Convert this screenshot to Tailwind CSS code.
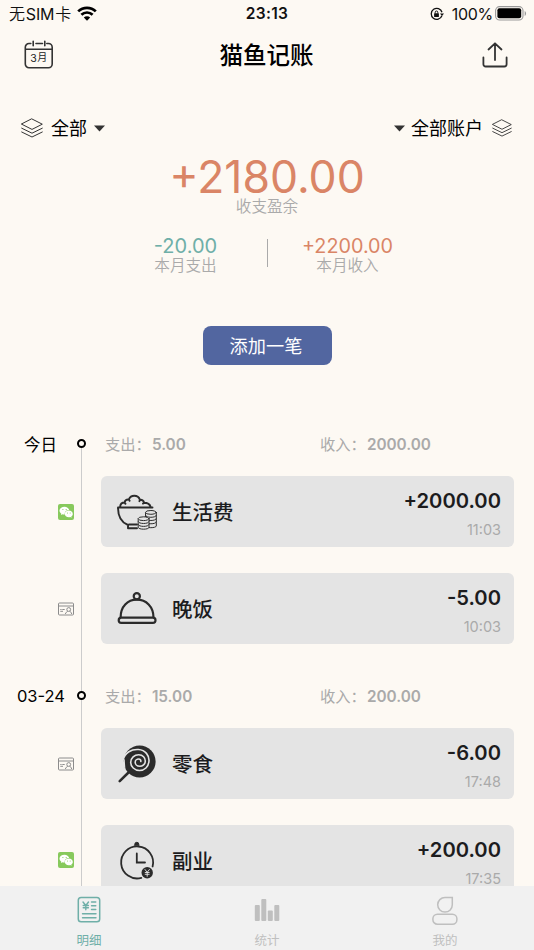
<!DOCTYPE html>
<html lang="zh-CN">
<head>
<meta charset="utf-8">
<meta name="viewport" content="width=device-width, initial-scale=1">
<title>猫鱼记账</title>
<script src="https://cdn.jsdelivr.net/npm/@tailwindcss/browser@4"></script>
</head>
<body class="bg-[#fdf9f3]">
<svg class="hidden">
  <defs>
    <g id="layers" fill="none" stroke="#333" stroke-linejoin="round" stroke-linecap="round">
      <path d="M11 1 21.3 6.2 11 11.400 .7 6.200Z M.7 10.200 11 15.200 21.300 10.200 M.7 14 11 19 21.300 14"/>
    </g>
    <g id="wechat">
      <rect width="16" height="16" rx="2" fill="#87c95c"/>
      <path fill="#fff" d="M6.500 2.700C3.700 2.700 1.500 4.400 1.500 6.600c0 1.300.7 2.300 1.800 3.100l-.4 1.400 1.700-.8c.7.2 1.300.3 2.200.2C6.200 8 8.300 5.900 11.200 6 10.700 4 8.800 2.700 6.500 2.700Z"/>
      <path fill="#fff" d="M10.800 6.600c-2.300 0-4 1.500-4 3.300s1.700 3.300 4 3.300c.5 0 1-.1 1.500-.2l1.300.7-.3-1.200c.9-.6 1.500-1.500 1.500-2.600 0-1.800-1.800-3.300-4-3.300Z"/>
      <g fill="#87c95c"><circle cx="4.900" cy="5.500" r=".6"/><circle cx="8.200" cy="5.500" r=".6"/><circle cx="9.500" cy="9" r=".5"/><circle cx="12.200" cy="9" r=".5"/></g>
    </g>
    <g id="idcard" fill="none" stroke="#8c8c8c" stroke-width="1">
      <rect x=".5" y="2" width="15" height="12" rx="1"/>
      <path d="M.5 5h15M2.300 8.500h1.300M4.300 8.500h2.400M2.300 10.300h2.700M7.400 13c.3-1.400 1.500-2.400 2.400-2.700M11.600 10.300c1 .3 1.800 1.200 2.100 2.700"/>
      <circle cx="10.700" cy="8.500" r="1.900"/>
    </g>
  </defs>
</svg>
<div class="w-[534px] h-[950px] overflow-hidden flex flex-col bg-[#fdf9f3] text-[#111] font-['Inter','Noto_Sans_CJK_SC',sans-serif] whitespace-nowrap">

  <!-- Status bar -->
  <div class="h-7 shrink-0 grid grid-cols-3 items-center pl-[9px] pr-[7px]">
    <div class="flex items-center text-[16px] tracking-[-0.2px]">
      <span class="font-[350]">无</span><span class="ml-[1px]">SIM</span><span class="ml-[1px] font-[350]">卡</span>
      <svg class="ml-[6px]" width="20" height="16" viewBox="0 0 20 16" fill="none" stroke="#000" stroke-width="2.700">
        <path d="M1.200 5.400a12.500 12.500 0 0 1 17.600 0M4.400 8.800a8 8 0 0 1 11.200 0"/><path d="M6.800 11.500a4.600 4.600 0 0 1 6.400 0L10 14.700Z" fill="#000" stroke="none"/>
      </svg>
    </div>
    <div class="text-center pr-[2px] text-[15.500px] font-semibold tracking-[0.300px]">23:13</div>
    <div class="flex items-center justify-end text-[16px]">
      <svg width="14" height="14" viewBox="0 0 14 14" fill="none" stroke="#111" stroke-width="1.300">
        <path d="M11.900 8.800A5.500 5.500 0 1 1 12 5.200"/><path d="M10 6.500h4L12 9Z" fill="#111" stroke="none"/>
        <rect x="4.100" y="6.300" width="4.800" height="3.600" rx=".5" fill="#111" stroke="none"/><path d="M5.200 6.500V5.300a1.300 1.300 0 0 1 2.600 0v1.200" stroke-width="1"/>
      </svg>
      <span class="ml-[8px] tracking-[-0.300px]">100%</span>
      <svg class="ml-[2px]" width="32" height="16" viewBox="0 0 32 16"><rect x=".6" y=".6" width="27.400" height="13.400" rx="4" fill="none" stroke="#999" stroke-width="1.100"/><rect x="2.400" y="2.300" width="23.800" height="10" rx="2" fill="#000"/><path d="M29.700 5c1.800.7 1.800 4.300 0 5Z" fill="#999"/></svg>
    </div>
  </div>

  <!-- Title bar -->
  <header class="h-[54px] shrink-0 flex items-center justify-between pl-[24px] pr-[26px]">
    <svg width="30" height="30" viewBox="0 0 30 30" fill="none" stroke="#333" stroke-width="1.600" stroke-linecap="round">
      <path d="M6.800 3.500H5a3.700 3.700 0 0 0-3.700 3.700V24A3.700 3.700 0 0 0 5 27.700h19.500a3.700 3.700 0 0 0 3.700-3.700V7.200a3.700 3.700 0 0 0-3.700-3.700h-1.700M12 3.500h6.500M1.500 9.200H28M9.200 1.200v4.600M20.800 1.200v4.600"/>
      <text x="6.200" y="21.500" font-size="10.500" fill="#222" stroke="none">3</text><text x="13.200" y="21.300" font-size="10" fill="#222" stroke="none">月</text>
    </svg>
    <h1 class="pt-[2px] pr-[3px] text-[23.500px] font-medium text-black">猫鱼记账</h1>
    <svg width="26" height="26" viewBox="0 0 26 26" fill="none" stroke="#333" stroke-width="1.800" stroke-linecap="round" stroke-linejoin="round">
      <path d="M13 18V1.500M6.500 7.500 13 1.300l6.500 6.200M1.400 15.500v6.800a2.200 2.200 0 0 0 2.200 2.200h18.800a2.200 2.200 0 0 0 2.200-2.200v-6.800"/>
    </svg>
  </header>

  <!-- Filters -->
  <div class="h-[32px] mt-[30px] shrink-0 flex items-center justify-between pl-[21px] pr-[22px] text-[18px] text-black">
    <div class="flex items-center">
      <svg width="22" height="20" viewBox="0 0 22 20"><use href="#layers"/></svg>
      <span class="ml-[8px] pt-px">全部</span>
      <svg class="ml-[7px]" width="11" height="7" viewBox="0 0 11 7"><path d="M0 .500h11L5.500 6.500Z" fill="#333"/></svg>
    </div>
    <div class="flex items-center">
      <svg width="11" height="7" viewBox="0 0 11 7"><path d="M0 .500h11L5.500 6.500Z" fill="#333"/></svg>
      <span class="ml-[6px] pt-px">全部账户</span>
      <svg class="ml-[9px]" width="20" height="18" viewBox="0 0 22 20"><use href="#layers"/></svg>
    </div>
  </div>

  <!-- Monthly summary -->
  <section class="shrink-0 flex flex-col items-center text-[#aaa]">
    <div class="mt-[11px] h-[44px] leading-[44px] text-[44.500px] text-[#da8566]">+2180.00</div>
    <div class="h-[20px] mt-[-2px] leading-[20px] text-[15.600px] font-[350]">收支盈余</div>
    <div class="mt-[19px] grid grid-cols-[162px_1px_162px]">
      <div class="text-center">
        <div class="h-[20px] leading-[20px] text-[20px] text-[#6fafa8]">-20.00</div>
        <div class="h-[20px] leading-[20px] text-[15.600px] font-[350]">本月支出</div>
      </div>
      <div class="mt-[3px] w-px h-[28px] bg-[#aaa]"></div>
      <div class="text-center pr-[2px]">
        <div class="h-[20px] leading-[20px] text-[19.800px] text-[#da8566]">+2200.00</div>
        <div class="h-[20px] leading-[20px] text-[15.600px] font-[350]">本月收入</div>
      </div>
    </div>
    <button class="mt-[50px] w-[129px] h-[39px] pt-[3px] pr-[2px] rounded-[8px] bg-[#5266a0] text-white text-[18.200px]">添加一笔</button>
  </section>

  <!-- Timeline -->
  <main class="mt-[46px] flex-1 min-h-0 overflow-hidden">
    <section>
      <div class="h-[65px] flex items-center">
        <div class="w-[57px] pt-[3px] text-right text-[16.500px] text-black">今日</div>
        <div class="ml-[20px] w-[9px] h-full flex flex-col items-center"><i class="h-[28px]"></i><i class="w-[9px] h-[9px] shrink-0 rounded-full border-2 border-black"></i><i class="w-px flex-1 bg-[#ccc]"></i></div>
        <div class="ml-[19px] w-[215px] pt-[3px] text-[15.300px] text-[#aaa]">支出：<span class="ml-px font-semibold">5.00</span></div>
        <div class="pt-[3px] text-[15.300px] text-[#aaa]">收入：<span class="ml-px font-semibold">2000.00</span></div>
      </div>
      <div class="h-[97px] flex">
        <div class="w-[82px] h-full border-r border-[#ccc] flex justify-end pr-[7px] pt-[28px]"><svg width="16" height="16"><use href="#wechat"/></svg></div>
        <article class="ml-[19px] w-[413px] h-[71px] rounded-[6px] bg-[#e4e4e4] flex items-center pl-[16px] pr-[13px]">
          <svg width="40" height="40" viewBox="0 0 40 40" fill="none" stroke="#2b2b2b" stroke-width="1.900" stroke-linecap="round" stroke-linejoin="round">
            <path d="M1 15.500H35.500M1 15.700c0 9 4 15 10 17.300v3.200h9M3.200 14.300c.2-2.300 1.800-3.700 4.300-3.800.6-2.300 2-3.300 4.300-3C13 4.500 15 3.700 17.300 3.700c2.600 0 4.600 1 5.600 4 2.300-.2 3.700 1 4.200 3 3 0 5.700 1.500 6.500 4M12 32.500h8M7.500 10.500l1 1.300M11.800 7.500l.8 1.300M22.900 7.700l-.5 1.500M27 10.700l-1 1"/>
            <g fill="#e4e4e4" stroke-width="1">
              <path d="M28.500 20.500v13.500c0 1 2.500 1.700 5.300 1.700s5.500-.7 5.500-1.700V20.500"/><ellipse cx="33.900" cy="20.400" rx="5.400" ry="1.900"/>
              <path d="M28.500 23.500c0 2.500 10.800 2.500 10.800 0M28.500 26.700c0 2.500 10.800 2.500 10.800 0M28.500 30c0 2.500 10.800 2.500 10.800 0"/>
              <path d="M21.200 26.800v8.500c0 2.500 10.800 2.500 10.800 0v-8.500"/><ellipse cx="26.600" cy="26.700" rx="5.400" ry="1.900"/>
              <path d="M21.200 29.700c0 2.500 10.800 2.500 10.800 0M21.200 32.600c0 2.500 10.800 2.500 10.800 0"/>
            </g>
          </svg>
          <span class="ml-[15px] pt-[3px] text-[20.500px] font-medium text-[#1c1c1e]">生活费</span>
          <div class="ml-auto pt-[3px] text-right"><div class="h-[30px] leading-[30px] text-[20.200px] font-semibold text-[#1c1c1e]">+2000.00</div><div class="h-[20px] mt-[4px] leading-[20px] text-[14.500px] text-[#aaa]">11:03</div></div>
        </article>
      </div>
      <div class="h-[90px] flex">
        <div class="w-[82px] h-full border-r border-[#ccc] flex justify-end pr-[7px] pt-[28px]"><svg width="16" height="16"><use href="#idcard"/></svg></div>
        <article class="ml-[19px] w-[413px] h-[71px] rounded-[6px] bg-[#e4e4e4] flex items-center pl-[16px] pr-[13px]">
          <svg width="40" height="40" viewBox="0 0 40 40" fill="none" stroke="#2b2b2b" stroke-width="2.200">
            <circle cx="19.800" cy="7.300" r="3.100"/><path d="M3.600 28.500C3.600 17.500 10.500 10.700 19.800 10.700S36.500 17.500 36.500 28.500"/><rect x="1.700" y="28.600" width="36.800" height="5.300" rx="2.600"/>
          </svg>
          <span class="ml-[15px] pt-[3px] text-[20.500px] font-medium text-[#1c1c1e]">晚饭</span>
          <div class="ml-auto pt-[3px] text-right"><div class="h-[30px] leading-[30px] text-[20.200px] font-semibold text-[#1c1c1e]">-5.00</div><div class="h-[20px] mt-[4px] leading-[20px] text-[14.500px] text-[#aaa]">10:03</div></div>
        </article>
      </div>
    </section>

    <section>
      <div class="h-[65px] flex items-center">
        <div class="w-[65px] pt-px text-right text-[16.500px] text-black">03-24</div>
        <div class="ml-[12px] w-[9px] h-full flex flex-col items-center"><i class="w-px h-[28px] bg-[#ccc]"></i><i class="w-[9px] h-[9px] shrink-0 rounded-full border-2 border-black"></i><i class="w-px flex-1 bg-[#ccc]"></i></div>
        <div class="ml-[19px] w-[215px] pt-[3px] text-[15.300px] text-[#aaa]">支出：<span class="ml-px font-semibold">15.00</span></div>
        <div class="pt-[3px] text-[15.300px] text-[#aaa]">收入：<span class="ml-px font-semibold">200.00</span></div>
      </div>
      <div class="h-[97px] flex">
        <div class="w-[82px] h-full border-r border-[#ccc] flex justify-end pr-[7px] pt-[28px]"><svg width="16" height="16"><use href="#idcard"/></svg></div>
        <article class="ml-[19px] w-[413px] h-[71px] rounded-[6px] bg-[#e4e4e4] flex items-center pl-[16px] pr-[13px]">
          <svg width="40" height="40" viewBox="0 0 40 40" fill="none" stroke-linecap="round">
            <path d="M2.700 37.200 12 28" stroke="#2b2b2b" stroke-width="2.600"/><circle cx="22.600" cy="17.500" r="16" fill="#2b2b2b"/>
            <path d="M6 16C8 8.500 14.500 5 21.500 5.500C28.500 6 32.300 11.500 32 17C31.500 23 27.500 26.500 22.500 26.500C17.500 26.500 13.700 22.500 13.700 18.500C13.700 14 17.500 10.800 21.700 10.800C26 10.800 28.300 14 28.300 17C28.300 20.300 25.500 22.300 22.800 22.300C19.800 22.300 18.200 20.200 18.200 18.200C18.200 16.200 20 15 21.700 15C23.200 15 24 16.300 23.800 17.500" stroke="#e4e4e4" stroke-width="1.600"/>
            <path d="M5.200 19.500 7.700 14.500 8 19.500 8.500 26Z" fill="#e4e4e4"/>
          </svg>
          <span class="ml-[15px] pt-[3px] text-[20.500px] font-medium text-[#1c1c1e]">零食</span>
          <div class="ml-auto pt-[3px] text-right"><div class="h-[30px] leading-[30px] text-[20.200px] font-semibold text-[#1c1c1e]">-6.00</div><div class="h-[20px] mt-[4px] leading-[20px] text-[14.500px] text-[#aaa]">17:48</div></div>
        </article>
      </div>
      <div class="h-[97px] flex">
        <div class="w-[82px] h-full border-r border-[#ccc] flex justify-end pr-[7px] pt-[27px]"><svg width="16" height="16"><use href="#wechat"/></svg></div>
        <article class="ml-[19px] w-[413px] h-[71px] rounded-[6px] bg-[#e4e4e4] flex items-center pl-[16px] pr-[13px]">
          <svg width="40" height="40" viewBox="0 0 40 40" fill="none" stroke="#2b2b2b" stroke-width="1.800" stroke-linecap="round">
            <path d="M35.600 25.500A16 16 0 1 0 24.300 36.900M19.800 12.500V21.500H28"/><path d="M17.800 4.500V3.300a2 2 0 0 1 4 0v1.200Z" fill="#2b2b2b" stroke-width="1"/>
            <circle cx="30.200" cy="31.800" r="5.700" fill="#2b2b2b" stroke="none"/><path d="m28 28.500 2.200 2.800 2.200-2.800M30.200 31.300v4M28.200 31.500h4M28.200 33.300h4" stroke="#e4e4e4" stroke-width=".9"/>
          </svg>
          <span class="ml-[15px] pt-[3px] text-[20.500px] font-medium text-[#1c1c1e]">副业</span>
          <div class="ml-auto pt-[3px] text-right"><div class="h-[30px] leading-[30px] text-[20.200px] font-semibold text-[#1c1c1e]">+200.00</div><div class="h-[20px] mt-[4px] leading-[20px] text-[14.500px] text-[#aaa]">17:35</div></div>
        </article>
      </div>
    </section>
  </main>

  <!-- Tab bar -->
  <nav class="h-[64px] shrink-0 grid grid-cols-3 bg-[#f1f1f1] text-[12.500px] text-[#bfbfbf]">
    <div class="flex flex-col items-center pt-[10px] text-[#6fafa8]">
      <svg width="24" height="28" viewBox="0 0 24 28" fill="none" stroke="#6fafa8" stroke-width="1.500" stroke-linecap="round"><rect x="1.300" y="1.500" width="21.400" height="24.200" rx="2.800"/><path d="m6 6 2.800 3.500L11.500 6M8.800 9.500v4.200M6.200 9.500h5.200M6.200 11.800h5.200M14.500 6h4.300M14.500 9.800h4.300M14.500 13.500h4.300M5.500 17.700h13.500M5.500 21.700h13.500" stroke-width="1.400"/></svg>
      <span class="mt-[8px] leading-[18px]">明细</span>
    </div>
    <div class="flex flex-col items-center pt-[10px]">
      <svg width="26" height="28" viewBox="0 0 26 28" fill="#bfbfbf"><rect x=".8" y="9" width="5" height="16" rx="1"/><rect x="7.300" y="3" width="5" height="22" rx="1"/><rect x="13.800" y="14.500" width="5" height="10.500" rx="1"/><rect x="20.300" y="9" width="5" height="16" rx="1"/></svg>
      <span class="mt-[8px] leading-[18px]">统计</span>
    </div>
    <div class="flex flex-col items-center pt-[9px]">
      <svg width="26" height="30" viewBox="0 0 26 30" fill="none" stroke="#bfbfbf" stroke-width="1.500"><path d="M13 2.500h7.300v7.200A7.300 7.300 0 1 1 13 2.500Z"/><rect x=".9" y="19.200" width="24" height="10" rx="4.500"/></svg>
      <span class="mt-[7px] leading-[18px]">我的</span>
    </div>
  </nav>
</div>
</body>
</html>
